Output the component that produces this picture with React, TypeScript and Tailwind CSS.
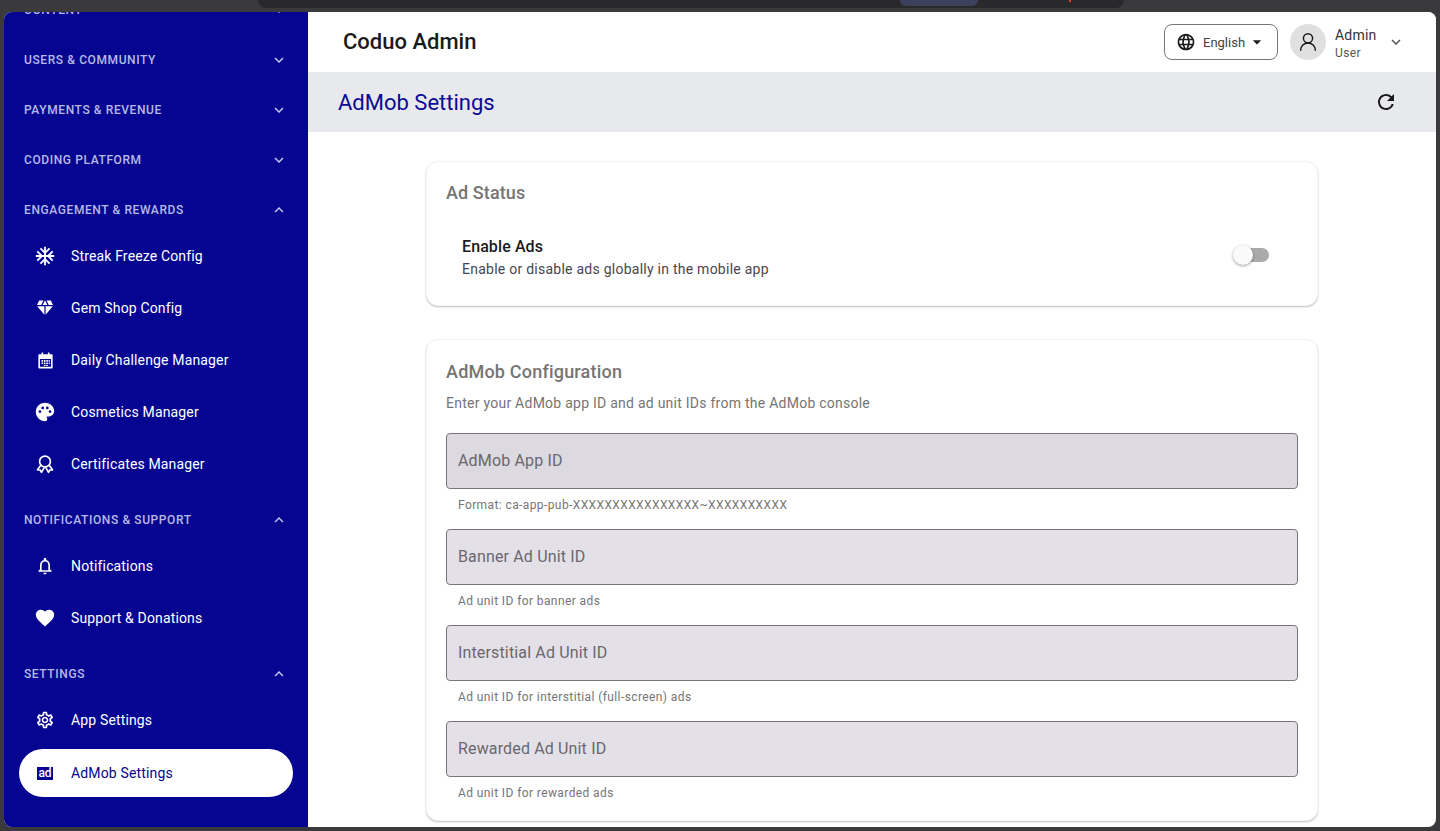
import {
  MdAcUnit,
  MdArrowDropDown,
  MdDiamond,
  MdFavorite,
  MdKeyboardArrowDown,
  MdKeyboardArrowUp,
  MdLanguage,
  MdOutlineNotifications,
  MdOutlineSettings,
  MdPalette,
  MdRefresh,
} from "react-icons/md";
import { UserRound } from "lucide-react";
import type { ComponentType } from "react";

type IconProps = { className?: string };

// calendar with a grid of dots
function CalendarGrid({ className }: IconProps) {
  return (
    <svg viewBox="0 0 24 24" className={className} fill="currentColor">
      <path d="M4 4h3V2h2v2h6V2h2v2h3a1 1 0 0 1 1 1v16a1 1 0 0 1-1 1H4a1 1 0 0 1-1-1V5a1 1 0 0 1 1-1zm1 6v10h14V10H5z" />
      <path d="M7 11.5h2v2H7zM10 11.5h2v2h-2zM13 11.5h2v2h-2zM16 11.5h1.5v2H16zM7 14.5h2v2H7zM10 14.5h2v2h-2zM13 14.5h2v2h-2zM16 14.5h1.5v2H16zM10 17.5h2v1.5h-2zM13 17.5h2v1.5h-2z" />
    </svg>
  );
}

// rosette with two ribbon tails
function Rosette({ className }: IconProps) {
  return (
    <svg viewBox="0 0 24 24" className={className} fill="none" stroke="currentColor" strokeWidth="2" strokeLinejoin="round">
      <circle cx="12" cy="9" r="6.5" />
      <path d="M7 13.5 3 19l3.2.2 1.6 2.8 3.4-6" />
      <path d="M17 13.5l4 5.5-3.2.2-1.6 2.8-3.4-6" />
    </svg>
  );
}

function GroupHeader({ label, open }: { label: string; open?: boolean }) {
  const Chevron = open ? MdKeyboardArrowUp : MdKeyboardArrowDown;
  return (
    <div className={`flex h-[44px] items-center justify-between pl-[20px] pr-[20px] ${open ? "" : "mb-[6px]"}`}>
      <span className="text-[12px] leading-none font-medium tracking-[0.6px] text-[#b9b9e8]">{label}</span>
      <Chevron className="size-[18px] text-[#c8c8ee]" />
    </div>
  );
}

function NavItem({ icon: Icon, label, size = "size-[20px]" }: { icon: ComponentType<IconProps>; label: string; size?: string }) {
  return (
    <div className="mx-[15px] mb-[4px] flex h-[48px] items-center pl-[16px] text-white">
      <div className="flex w-[20px] shrink-0 justify-center">
        <Icon className={`${size} shrink-0`} />
      </div>
      <span className="ml-[16px] text-[14px] tracking-[0.15px]">{label}</span>
    </div>
  );
}

function Sidebar() {
  return (
    <aside className="w-[304px] shrink-0 overflow-hidden bg-[#050591]">
      <div className="-mt-[24px]">
        <GroupHeader label="CONTENT" />
        <GroupHeader label="USERS & COMMUNITY" />
        <GroupHeader label="PAYMENTS & REVENUE" />
        <GroupHeader label="CODING PLATFORM" />
        <GroupHeader label="ENGAGEMENT & REWARDS" open />
        <NavItem icon={MdAcUnit} label="Streak Freeze Config" size="size-[22px]" />
        <NavItem icon={MdDiamond} label="Gem Shop Config" />
        <NavItem icon={CalendarGrid} label="Daily Challenge Manager" size="size-[19px]" />
        <NavItem icon={MdPalette} label="Cosmetics Manager" size="size-[22px]" />
        <NavItem icon={Rosette} label="Certificates Manager" size="size-[20px]" />
        <div className="h-[6px]" />
        <GroupHeader label="NOTIFICATIONS & SUPPORT" open />
        <NavItem icon={MdOutlineNotifications} label="Notifications" />
        <NavItem icon={MdFavorite} label="Support & Donations" size="size-[22px]" />
        <div className="h-[6px]" />
        <GroupHeader label="SETTINGS" open />
        <NavItem icon={MdOutlineSettings} label="App Settings" />
        <div className="mx-[15px] mt-[5px] flex h-[48px] items-center rounded-full bg-white pl-[18px] text-[#050591]">
          <span className="flex h-[13px] w-[16px] shrink-0 items-center justify-center bg-[#050591] text-[12px] leading-none font-medium text-white">
            ad
          </span>
          <span className="ml-[18px] text-[14px] tracking-[0.15px]">AdMob Settings</span>
        </div>
      </div>
    </aside>
  );
}

function Field({ label, help, dark }: { label: string; help: string; dark?: boolean }) {
  return (
    <div className="mb-[16px]">
      <div className={`flex h-[56px] items-center rounded-[4px] border border-[#79747e] px-[11px] ${dark ? "bg-[#dcd9e0]" : "bg-[#e3e1e7]"}`}>
        <span className="text-[16px] tracking-[0.15px] text-[#6a6770]">{label}</span>
      </div>
      <p className="mt-[8px] px-[12px] text-[12px] leading-[16px] tracking-[0.4px] text-[#757575]">{help}</p>
    </div>
  );
}

export default function App() {
  return (
    <div className="h-[831px] overflow-hidden bg-[#3a3a3d] px-[4px] pt-[12px] pb-[4px] font-['Roboto',sans-serif]">
      {/* window strip above the page */}
      <div className="-mt-[12px] flex h-[12px] pl-[254px]">
        <div className="flex h-[8px] w-[866px] rounded-b-[8px] bg-[#29292b] pl-[642px]">
          <div className="h-[6px] w-[78px] rounded-b-[6px] bg-[#3d405c]" />
          <div className="ml-[91px] size-[2px] bg-[#d9441c]" />
        </div>
      </div>
      <div className="flex h-[815px] overflow-hidden rounded-[8px] bg-white">
        <Sidebar />
        <main className="min-w-0 flex-1">
          <header className="flex h-[60px] items-center justify-between bg-white pr-[31px] pl-[35px]">
            <h1 className="pb-[2px] text-[22px] font-medium text-[#1a1a1a]">Coduo Admin</h1>
            <div className="flex items-center">
              <div className="flex h-[36px] w-[114px] items-center rounded-[8px] border border-[#79747e] pl-[11px]">
                <MdLanguage className="size-[20px] text-[#1a1a1a]" />
                <span className="ml-[7px] pt-[1px] text-[13px] text-[#444]">English</span>
                <MdArrowDropDown className="ml-[2px] size-[20px] text-[#1a1a1a]" />
              </div>
              <div className="ml-[12px] flex size-[36px] items-center justify-center rounded-full bg-[#e0e0e0]">
                <UserRound className="size-[22px] text-[#1a1a1a]" strokeWidth={1.6} />
              </div>
              <div className="ml-[9px] w-[51px] pt-[3px]">
                <div className="text-[14px] leading-[18px] tracking-[0.2px] text-[#333]">Admin</div>
                <div className="text-[12px] leading-[18px] tracking-[0.4px] text-[#555]">User</div>
              </div>
              <MdKeyboardArrowDown className="ml-[1px] size-[18px] text-[#555]" />
            </div>
          </header>
          <div className="flex h-[60px] items-center justify-between bg-[#e8e9ed] pr-[38px] pl-[30px]">
            <h2 className="text-[22px] text-[#0a0a96]">AdMob Settings</h2>
            <MdRefresh className="size-[24px] text-[#1a1a1a]" />
          </div>
          <div className="mx-auto w-[892px] pt-[29px]">
            <section className="h-[145px] rounded-[12px] border border-[#f5f5f5] bg-white px-[19px] pt-[19px] shadow-[0_1px_2px_rgba(0,0,0,0.25)]">
              <h3 className="text-[18px] leading-[24px] font-medium tracking-[0.1px] text-[#757575]">Ad Status</h3>
              <div className="mt-[30px] flex items-center justify-between pr-[29px] pl-[16px]">
                <div>
                  <div className="text-[16px] leading-[24px] font-medium tracking-[0.1px] text-[#1a1a1a]">Enable Ads</div>
                  <div className="text-[14px] leading-[20px] tracking-[0.25px] text-[#49454f]">Enable or disable ads globally in the mobile app</div>
                </div>
                <div className="relative mb-[4px] h-[14px] w-[34px] rounded-full bg-[#aaaaaa]">
                  <div className="absolute top-[-3px] left-[-2px] size-[20px] rounded-full bg-[#fafafa] shadow-[0_1px_3px_rgba(0,0,0,0.4)]" />
                </div>
              </div>
            </section>
            <section className="mt-[33px] rounded-[12px] border border-[#f5f5f5] bg-white px-[19px] pt-[20px] pb-[3px] shadow-[0_1px_2px_rgba(0,0,0,0.25)]">
              <h3 className="text-[18px] leading-[24px] font-medium tracking-[0.2px] text-[#757575]">AdMob Configuration</h3>
              <p className="mt-[9px] mb-[20px] text-[14px] leading-[20px] tracking-[0.25px] text-[#757575]">
                Enter your AdMob app ID and ad unit IDs from the AdMob console
              </p>
              <Field dark label="AdMob App ID" help="Format: ca-app-pub-XXXXXXXXXXXXXXXX~XXXXXXXXXX" />
              <Field label="Banner Ad Unit ID" help="Ad unit ID for banner ads" />
              <Field label="Interstitial Ad Unit ID" help="Ad unit ID for interstitial (full-screen) ads" />
              <Field label="Rewarded Ad Unit ID" help="Ad unit ID for rewarded ads" />
            </section>
          </div>
        </main>
      </div>
    </div>
  );
}
